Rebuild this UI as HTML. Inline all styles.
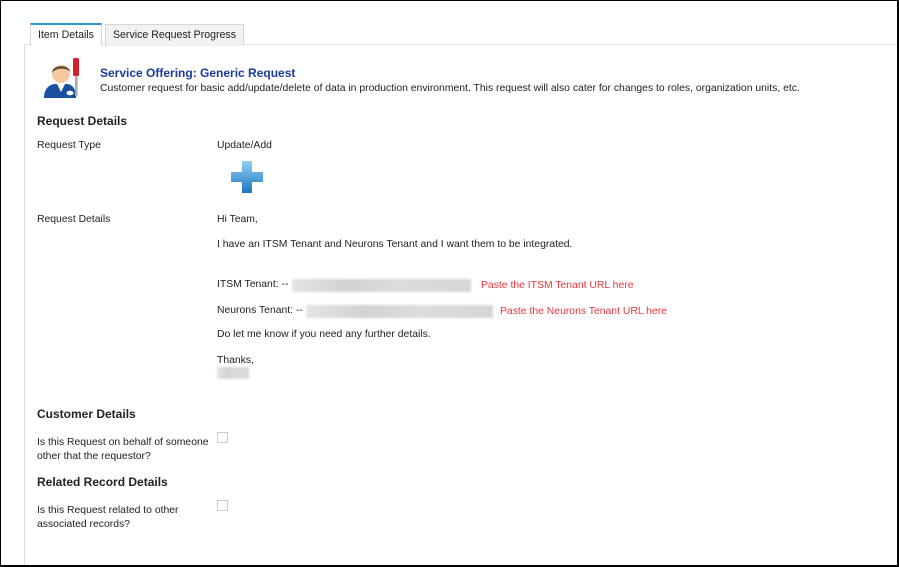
<!DOCTYPE html>
<html><head><meta charset="utf-8"><style>
*{margin:0;padding:0;box-sizing:border-box}
body{width:899px;height:567px;background:#fff;font-family:"Liberation Sans",Arial,sans-serif;font-size:10.4px;color:#222;position:relative;overflow:hidden}
.frame{position:absolute;left:0;top:0;width:899px;height:567px;border:1px solid #000;border-right-width:2px;border-bottom-width:2px}
.a{position:absolute;white-space:nowrap}
.tab{position:absolute;height:22px;border:1px solid #d6d6d6;border-bottom:none;font-size:10.6px;text-align:center;line-height:20px;color:#222}
.h{font-weight:bold;font-size:12px;color:#222}
.blur{position:absolute;height:13px;background:linear-gradient(90deg,#e4e4e4,#d2d2d2 30%,#dcdcdc 60%,#d6d6d6);filter:blur(1px)}
.red{color:#e8363c}
.cb{position:absolute;width:11px;height:11px;border:1px solid #ccc;background:#fff}
</style></head><body>
<div class="a" style="left:24px;top:44px;width:875px;height:523px;border-left:1px solid #ddd;border-top:1px solid #e2e2e2"></div>
<div class="tab" style="left:30px;top:23px;width:72px;background:#fff;border-top:2px solid #2e94d6;height:23px">Item Details</div>
<div class="tab" style="left:105px;top:24px;width:139px;background:#f2f2f2">Service Request Progress</div>

<svg class="a" style="left:40px;top:56px" width="44" height="42" viewBox="0 0 44 42">
<path d="M4 42 C4 32 10 28 16 28 L26 28 C32 28 36 32 36 42Z" fill="#1b4fa0"/>
<path d="M17 28 L21 36 L25 28Z" fill="#fff"/>
<circle cx="21" cy="18" r="9" fill="#f4c9a0"/>
<path d="M12 17 C12 8 30 8 30 16 C28 12 16 11 12 17Z" fill="#6b4a2a"/>
<ellipse cx="30" cy="37" rx="3.5" ry="2.3" fill="#fff"/>
<rect x="33" y="2" width="6" height="18" rx="1.5" fill="#d8202a"/>
<rect x="35" y="20" width="2.5" height="20" fill="#aaa"/>
</svg>
<div class="a" style="left:100px;top:66px;font-size:12px;font-weight:bold;color:#1a3a9e">Service Offering: Generic Request</div>
<div class="a" style="left:100px;top:83px">Customer request for basic add/update/delete of data in production environment. This request will also cater for changes to roles, organization units, etc.</div>

<div class="a h" style="left:37px;top:114px">Request Details</div>
<div class="a" style="left:37px;top:140px">Request Type</div>
<div class="a" style="left:217px;top:140px">Update/Add</div>
<svg class="a" style="left:230px;top:160px" width="34" height="34" viewBox="0 0 34 34">
<defs><linearGradient id="g" x1="0" y1="0" x2="0" y2="1"><stop offset="0" stop-color="#8fd0f4"/><stop offset="1" stop-color="#1d74c4"/></linearGradient></defs>
<path d="M12 1h10v11h11v10H22v11H12V22H1V12h11z" fill="url(#g)"/>
</svg>
<div class="a" style="left:37px;top:214px">Request Details</div>
<div class="a" style="left:217px;top:214px">Hi Team,</div>
<div class="a" style="left:217px;top:239px">I have an ITSM Tenant and Neurons Tenant and I want them to be integrated.</div>
<div class="a" style="left:217px;top:279px">ITSM Tenant: --</div>
<div class="blur" style="left:292px;top:279px;width:179px"></div>
<div class="a red" style="left:481px;top:280px">Paste the ITSM Tenant URL here</div>
<div class="a" style="left:217px;top:305px">Neurons Tenant: --</div>
<div class="blur" style="left:306px;top:305px;width:187px"></div>
<div class="a red" style="left:500px;top:306px">Paste the Neurons Tenant URL here</div>
<div class="a" style="left:217px;top:329px">Do let me know if you need any further details.</div>
<div class="a" style="left:217px;top:355px">Thanks,</div>
<div class="blur" style="left:217px;top:367px;width:32px;height:12px"></div>

<div class="a h" style="left:37px;top:407px">Customer Details</div>
<div class="a" style="left:37px;top:436px;line-height:14px">Is this Request on behalf of someone<br>other that the requestor?</div>
<div class="cb" style="left:217px;top:432px"></div>
<div class="a h" style="left:37px;top:475px">Related Record Details</div>
<div class="a" style="left:37px;top:504px;line-height:14px">Is this Request related to other<br>associated records?</div>
<div class="cb" style="left:217px;top:500px"></div>
<div class="frame"></div>
</body></html>
